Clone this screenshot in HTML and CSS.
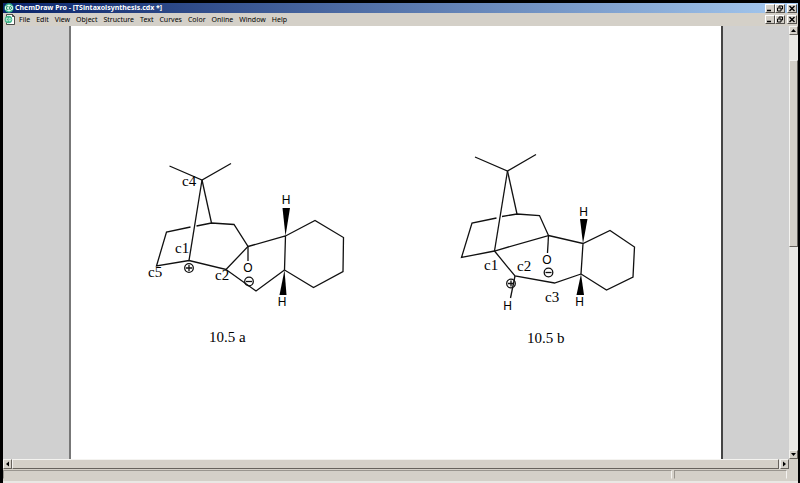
FILE: index.html
```
<!DOCTYPE html>
<html lang="en">
<head>
    <meta charset="UTF-8">
    <title>ChemDraw Pro</title>
    <link rel="stylesheet" href="styles.css">
</head>
<body>
    <header class="title-bar">
        <svg class="app-icon" viewBox="0 0 10 10">
            <circle cx="5" cy="5" r="4.7" fill="#2fae86"/>
            <path d="M1 3.5 L5 1.5 L9 3.5 V6.5 L5 8.5 L1 6.5 Z" fill="#e4f8ef"/>
            <path d="M4.5 3.7 H2.5 V6.3 H4.5 M5.6 3.7 H7 L8 5 L7 6.3 H5.6 Z" fill="none" stroke="#168a62" stroke-width="0.9"/>
        </svg>
        <h1 class="title">ChemDraw Pro - [TSintaxolsynthesis.cdx *]</h1>
        <div class="window-buttons">
            <button class="window-button" aria-label="Minimize"><svg viewBox="0 0 8 7"><path d="M1 5.500 H5" stroke="#000" stroke-width="1.5"/></svg></button>
            <button class="window-button" aria-label="Restore"><svg viewBox="0 0 8 7"><path d="M3 2.500 V1 H6.500 V4 H5 M1.500 3 H5 V6 H1.500 Z" fill="none" stroke="#000"/></svg></button>
            <button class="window-button close" aria-label="Close"><svg viewBox="0 0 8 7"><path d="M1.500 1 L6.500 6 M6.500 1 L1.500 6" stroke="#000" stroke-width="1.4"/></svg></button>
        </div>
    </header>

    <nav class="menu-bar">
        <svg class="doc-icon" viewBox="0 0 12 11">
            <path d="M2.5 0.5 H8.5 L10.5 2.5 V10.5 H2.5 Z" fill="#fff" stroke="#222" stroke-width="0.8"/>
            <path d="M8.5 0.5 V2.5 H10.5" fill="none" stroke="#222" stroke-width="0.8"/>
            <circle cx="4.5" cy="5.5" r="3.8" fill="#3fb489"/>
            <path d="M4 4.2 H2.3 V6.8 H4 M5 4.2 H6.2 L7 5.5 L6.2 6.8 H5 Z" fill="none" stroke="#e4f8ef" stroke-width="0.8"/>
        </svg>
        <button class="menu">File</button>
        <button class="menu">Edit</button>
        <button class="menu">View</button>
        <button class="menu">Object</button>
        <button class="menu">Structure</button>
        <button class="menu">Text</button>
        <button class="menu">Curves</button>
        <button class="menu">Color</button>
        <button class="menu">Online</button>
        <button class="menu">Window</button>
        <button class="menu">Help</button>
        <div class="window-buttons">
            <button class="window-button" aria-label="Minimize document"><svg viewBox="0 0 8 7"><path d="M1 5.500 H5" stroke="#000" stroke-width="1.5"/></svg></button>
            <button class="window-button" aria-label="Restore document"><svg viewBox="0 0 8 7"><path d="M3 2.500 V1 H6.500 V4 H5 M1.500 3 H5 V6 H1.500 Z" fill="none" stroke="#000"/></svg></button>
            <button class="window-button close" aria-label="Close document"><svg viewBox="0 0 8 7"><path d="M1.500 1 L6.500 6 M6.500 1 L1.500 6" stroke="#000" stroke-width="1.4"/></svg></button>
        </div>
    </nav>

    <div class="document">
        <main class="workspace">
            <div class="sheet">
                <svg class="drawing" viewBox="71 26 650 433">
                    <!-- structure 10.5 a -->
                    <g class="bonds">
                        <path d="M169.5 166 L202 180 L231 163.500"/>
                        <path d="M202 180 L189 260.500"/>
                        <path d="M202 180 L211.500 223"/>
                        <path d="M190.500 227 L166.500 232 L156.500 266 L189 260.500 L226 269.500 L248 246.500 L234 224.500 L211.500 223 L196.500 226"/>
                        <path d="M248 246.500 V261"/>
                        <path d="M248 246.500 L285.500 236 L315 220.500 L343.500 237.500 L343 271.500 L313.500 287.500 L284.500 270 L285.500 236"/>
                        <path d="M226 269.500 L256 291 L284.500 270"/>
                        <circle cx="189" cy="268" r="4.300"/>
                        <path d="M186 268 H192 M189 265 V271"/>
                        <circle cx="249" cy="281.500" r="4.300"/>
                        <path d="M246 281.500 H252"/>
                    </g>
                    <path class="wedge" d="M285.500 236 L282.500 208 H290 Z"/>
                    <path class="wedge" d="M284.500 270 L279.500 295 H286.500 Z"/>
                    <g class="atoms">
                        <text x="286" y="204">H</text>
                        <text x="282" y="306">H</text>
                        <text x="248" y="272">O</text>
                    </g>
                    <g class="labels">
                        <text x="182" y="186">c4</text>
                        <text x="175" y="253">c1</text>
                        <text x="148" y="277">c5</text>
                        <text x="215" y="280">c2</text>
                        <text x="209" y="342">10.5 a</text>
                    </g>

                    <!-- structure 10.5 b -->
                    <g class="bonds">
                        <path d="M475 157 L507.500 171 L536 154.500"/>
                        <path d="M507.500 171 L494.500 251"/>
                        <path d="M507.500 171 L517 214"/>
                        <path d="M496.500 218 L472 223 L461.500 257.500 L494.500 251 L548.500 235.500 L539.500 215.500 L517 214 L502 216.500"/>
                        <path d="M548.500 235.500 L547.500 253"/>
                        <path d="M548.500 235.500 L583 243.500 L610 230.500 L634.500 247 L633 277 L606.500 290 L581 274 L583 243.500"/>
                        <path d="M494.500 251 L515 276 L554.500 283 L581 274"/>
                        <path d="M515 276 L510.500 298"/>
                        <circle cx="511" cy="283.500" r="4.300"/>
                        <path d="M508 283.500 H514 M511 280.500 V286.500"/>
                        <circle cx="548.500" cy="272.500" r="4.300"/>
                        <path d="M545.500 272.500 H551.500"/>
                    </g>
                    <path class="wedge" d="M583 243.500 L580 219 H587.500 Z"/>
                    <path class="wedge" d="M581 274 L576.500 295 H584 Z"/>
                    <g class="atoms">
                        <text x="583.500" y="216">H</text>
                        <text x="579.500" y="306">H</text>
                        <text x="547" y="264">O</text>
                        <text x="507.500" y="310">H</text>
                    </g>
                    <g class="labels">
                        <text x="484" y="270">c1</text>
                        <text x="517" y="271">c2</text>
                        <text x="545" y="302">c3</text>
                        <text x="527" y="343">10.5 b</text>
                    </g>
                </svg>
            </div>
        </main>
        <div class="scrollbar vertical">
            <button class="scroll-button" aria-label="Scroll up"><svg viewBox="0 0 7 7"><path d="M1 5 L3.500 2 L6 5 Z"/></svg></button>
            <div class="track"><div class="thumb"></div></div>
            <button class="scroll-button" aria-label="Scroll down"><svg viewBox="0 0 7 7"><path d="M1 2 L3.500 5 L6 2 Z"/></svg></button>
        </div>
    </div>

    <div class="scrollbar horizontal">
        <button class="scroll-button" aria-label="Scroll left"><svg viewBox="0 0 7 7"><path d="M5 1 L2 3.500 L5 6 Z"/></svg></button>
        <div class="track"><div class="thumb"></div></div>
        <button class="scroll-button" aria-label="Scroll right"><svg viewBox="0 0 7 7"><path d="M2 1 L5 3.500 L2 6 Z"/></svg></button>
        <div class="corner"></div>
    </div>

    <footer class="status-bar">
        <div class="status-cell message"></div>
        <div class="status-cell info"></div>
    </footer>
</body>
</html>
```
FILE: styles.css
```
/* Global Styles */
* {
    box-sizing: border-box;
}

body {
    margin: 0;
    height: 100vh;
    display: flex;
    flex-direction: column;
    font-family: "Noto Sans", Tahoma, sans-serif;
    font-size: 7px;
    line-height: 10px;
    color: #000;
    background-color: #d4d0c8;
    border: solid #000;
    border-width: 3px 2px 0 3px;
    overflow: hidden;
}

button {
    margin: 0;
    padding: 0;
    border: none;
    font: inherit;
    color: inherit;
    background: none;
}

svg {
    display: block;
}

/* Title and Menu */
.title-bar {
    flex: none;
    display: flex;
    align-items: center;
    height: 10px;
    padding: 0 1px;
    background: linear-gradient(to right, #0a246a, #a6caf0);
}

.app-icon {
    width: 10px;
    height: 10px;
}

.title {
    margin: 0 0 0 1px;
    font-size: 7px;
    font-weight: bold;
    color: #fff;
}

.menu-bar {
    flex: none;
    display: flex;
    align-items: center;
    gap: 6px;
    height: 13px;
    padding: 0 1px;
}

.doc-icon {
    width: 12px;
    height: 11px;
    margin-right: -3px;
}

.window-buttons {
    display: flex;
    margin-left: auto;
}

.window-button {
    width: 10px;
    height: 9px;
    background-color: #d4d0c8;
    border: 1px solid;
    border-color: #fff #55524d #55524d #fff;
}

.window-button.close {
    margin-left: 2px;
}

.window-button svg {
    width: 100%;
    height: 100%;
}

/* Document */
.document {
    flex: 1;
    display: flex;
    min-height: 0;
}

.workspace {
    flex: 1;
    min-width: 0;
    padding: 0 66px;
    background-color: #d0d0d0;
}

.sheet {
    height: 100%;
    background-color: #fff;
    border-left: 2px solid #777;
    border-right: 2px solid #444;
}

.drawing {
    width: 100%;
    height: 100%;
}

.bonds {
    fill: none;
    stroke: #111;
    stroke-width: 1.3;
}

.wedge {
    fill: #000;
}

.atoms {
    font-family: "Liberation Sans", Arial, sans-serif;
    font-size: 12px;
    text-anchor: middle;
}

.labels {
    font-family: "Liberation Serif", "Times New Roman", serif;
    font-size: 15px;
}

/* Scrollbars */
.scrollbar {
    flex: none;
    display: flex;
}

.scrollbar .track {
    flex: 1;
    display: flex;
    background-color: #e9e8e4;
}

.scroll-button,
.thumb {
    background-color: #d4d0c8;
    border: 1px solid;
    border-color: #f4f3f0 #66625c #66625c #f4f3f0;
}

.scroll-button {
    width: 9px;
    height: 9px;
}

.scroll-button svg {
    width: 100%;
    height: 100%;
}

.vertical {
    flex-direction: column;
    width: 9px;
}

.vertical .track {
    flex-direction: column;
    padding-top: 25px;
}

.vertical .thumb {
    height: 48%;
}

.horizontal {
    height: 10px;
}

.horizontal .scroll-button {
    height: 10px;
}

.horizontal .thumb {
    flex: 1;
    margin-right: 1px;
}

.corner {
    width: 9px;
}

/* Status Bar */
.status-bar {
    flex: none;
    display: flex;
    gap: 2px;
    height: 14px;
    padding: 1px 11px 2px 0;
    border-bottom: 2px solid #e9e8e4;
}

.status-cell {
    border: 1px solid;
    border-color: #99958e #f4f3f0 #d4d0c8 #99958e;
}

.message {
    flex: 6;
}

.info {
    flex: 1;
}
```
